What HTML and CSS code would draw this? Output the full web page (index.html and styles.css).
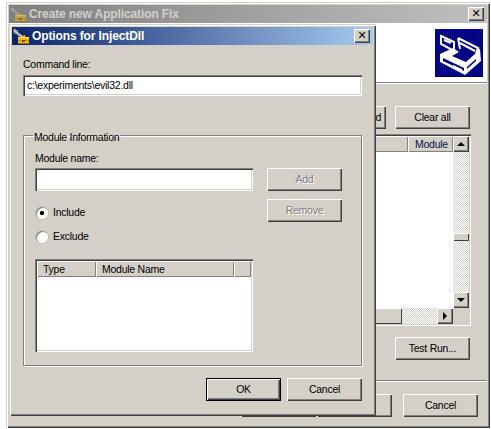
FILE: index.html
```html
<!DOCTYPE html>
<html lang="en">
<head>
<meta charset="utf-8">
<title>Options for InjectDll</title>
<link rel="stylesheet" href="styles.css">
</head>
<body>
<svg class="defs" width="0" height="0" aria-hidden="true">
  <defs>
    <symbol id="toolbox" viewBox="0 0 16 16">
      <path d="M0 2l2-2 1 2 2 0 0 2 5 4-2 2-5-4-2 0z" fill="#8f94a0"/>
      <path d="M1 2l2 2 5 4" stroke="#eceef2" fill="none"/>
      <path d="M5 9h3V7h4v2h4v7H5z" fill="#f0b818"/>
      <path d="M5 9h11v1H5z" fill="#fbe070"/>
      <path d="M5 15h11v1H5zM9 7h2v1H9z" fill="#a06c10"/>
      <path d="M5 12h11v1H5z" fill="#c48a12"/>
      <path d="M9 12h3v2H9z" fill="#7a5208"/>
    </symbol>
  </defs>
</svg>

<section class="win win-back">
  <header class="title title-off">
    <svg class="title-icon"><use href="#toolbox"/></svg>
    <span class="title-text">Create new Application Fix</span>
    <span class="close">✕</span>
  </header>
  <div class="banner">
    <svg class="logo" viewBox="0 0 48 48">
      <defs>
        <pattern id="dots" width="2" height="2" patternUnits="userSpaceOnUse">
          <rect width="2" height="2" fill="#000090"/>
          <rect width="1" height="1" fill="#0000ff"/>
          <rect x="1" y="1" width="1" height="1" fill="#000"/>
        </pattern>
      </defs>
      <rect width="48" height="48" fill="url(#dots)"/>
      <path d="M6 7l13 6v9l-13-7z" fill="none" stroke="#fff" stroke-width="2"/>
      <path d="M9 11l7 3" stroke="#fff" stroke-width="2"/>
      <path d="M23 9l20 10-2 5M23 9l2 11M25 14l15 8" fill="none" stroke="#fff" stroke-width="2"/>
      <path d="M5 25l13-6 6 4-7 4 14 6 10-9 1-5 3 1 1 12-16 14L5 33z" fill="#fff"/>
      <path d="M8 29l21 10v3L8 32z" fill="url(#dots)"/>
      <path d="M18 36l9 4v2l-9-4z" fill="#fff"/>
      <path d="M32 38l9-8v2l-9 8z" fill="url(#dots)"/>
    </svg>
  </div>
  <div class="rule"></div>
  <div class="back-body">
    <div class="tools">
      <button class="btn" type="button">Show selected</button>
      <button class="btn" type="button">Clear all</button>
    </div>
    <div class="fixlist">
      <div class="fixlist-main">
        <div class="head head-back">
          <span class="cell cell-grow"></span>
          <span class="cell cell-module">Module</span>
        </div>
        <div class="fixlist-rows"></div>
        <div class="hbar">
          <span class="hthumb"></span>
          <span class="track"></span>
          <span class="sbtn"><i class="tri tri-right"></i></span>
        </div>
      </div>
      <div class="vbar">
        <span class="sbtn sbtn-tall"><i class="tri tri-up"></i></span>
        <span class="track track-v"><span class="vthumb"></span></span>
        <span class="sbtn sbtn-tall"><i class="tri tri-down"></i></span>
        <span class="corner"></span>
      </div>
    </div>
    <div class="testrow"><button class="btn" type="button">Test Run...</button></div>
    <div class="sep"></div>
    <div class="nav">
      <button class="btn btn-back" type="button"></button>
      <button class="btn" type="button"></button>
      <button class="btn btn-cancel" type="button">Cancel</button>
    </div>
  </div>
</section>

<section class="win win-front">
  <header class="title title-on">
    <svg class="title-icon"><use href="#toolbox"/></svg>
    <span class="title-text">Options for InjectDll</span>
    <span class="close">✕</span>
  </header>
  <div class="front-body">
    <label class="cmd-label">Command line:</label>
    <div class="field field-cmd">c:\experiments\evil32.dll</div>
    <fieldset class="group">
      <legend>Module Information</legend>
      <div class="group-grid">
        <div class="group-left">
          <label class="mod-label">Module name:</label>
          <div class="field field-mod"></div>
          <div class="radio radio-first"><i class="dot dot-on"></i><span>Include</span></div>
          <div class="radio"><i class="dot"></i><span>Exclude</span></div>
          <div class="modlist">
            <div class="head head-front">
              <span class="cell cell-type">Type</span>
              <span class="cell cell-name">Module Name</span>
              <span class="cell cell-fill"></span>
            </div>
          </div>
        </div>
        <div class="group-right">
          <button class="btn btn-off" type="button">Add</button>
          <button class="btn btn-off" type="button">Remove</button>
        </div>
      </div>
    </fieldset>
    <div class="actions">
      <button class="btn btn-default" type="button">OK</button>
      <button class="btn" type="button">Cancel</button>
    </div>
  </div>
</section>
</body>
</html>
```
FILE: styles.css
```css
* { box-sizing: border-box; }
html, body { margin: 0; height: 429px; overflow: hidden; background: #fff; }
body { position: relative; font: 10.5px/13px "Liberation Sans", sans-serif; letter-spacing: -.25px; color: #000; }
.defs { position: absolute; }

.win {
  position: absolute;
  display: flex;
  flex-direction: column;
  padding: 3px;
  background: #d4d0c8;
  box-shadow: inset 1px 1px 0 #d4d0c8, inset 2px 2px 0 #fff, inset -1px -1px 0 #404040, inset -2px -2px 0 #808080;
}
.win-back { left: 6px; top: 2px; width: 484px; height: 426px; }
.win-front { left: 9px; top: 24px; width: 367px; height: 392px; }

.title {
  flex: none;
  display: flex;
  align-items: center;
  height: 18px;
  padding: 0 3px 0 0;
  color: #fff;
  font: bold 12px/18px "Liberation Sans", sans-serif;
  letter-spacing: -.12px;
}
.title-off { background: linear-gradient(90deg, #808080, #c0c0c0); color: #d4d0c8; }
.title-on { background: linear-gradient(90deg, #0a246a, #a6caf0); }
.title-icon { width: 16px; height: 16px; margin: 0 3px 0 1px; flex: none; }
.title-off .title-icon { opacity: .6; }
.title-text { flex: 1; }
.close {
  flex: none;
  width: 16px;
  height: 14px;
  background: #d4d0c8;
  color: #000;
  font: bold 11px/14px "DejaVu Sans", sans-serif;
  text-align: center;
  box-shadow: inset 1px 1px 0 #fff, inset -1px -1px 0 #404040, inset -2px -2px 0 #808080;
}

.banner { flex: none; height: 59px; background: #fff; display: flex; justify-content: flex-end; align-items: center; padding-right: 4px; }
.logo { width: 48px; height: 48px; display: block; }
.rule { flex: none; height: 2px; background: #808080; border-bottom: 1px solid #fff; }

.back-body { flex: 1; display: flex; flex-direction: column; padding: 22px 0 0 0; }
.tools { display: flex; justify-content: flex-end; gap: 9px; padding-right: 17px; }
.btn {
  width: 75px;
  height: 23px;
  padding: 0;
  border: 0;
  flex: none;
  background: #d4d0c8;
  color: #000;
  font: 10.5px/13px "Liberation Sans", sans-serif;
  letter-spacing: -.25px;
  box-shadow: inset 1px 1px 0 #fff, inset -1px -1px 0 #404040, inset -2px -2px 0 #808080;
}
.btn-off { color: #808080; text-shadow: 1px 1px 0 #fff; }
.btn-default { box-shadow: inset 0 0 0 1px #000, inset 2px 2px 0 #fff, inset -2px -2px 0 #404040, inset -3px -3px 0 #808080; }

.fixlist {
  flex: none;
  display: flex;
  height: 192px;
  margin: 5px 16px 0 20px;
  padding: 2px;
  background: #d4d0c8;
  box-shadow: inset 1px 1px 0 #808080, inset 2px 2px 0 #404040, inset -1px -1px 0 #fff;
}
.fixlist-main { flex: 1; display: flex; flex-direction: column; min-width: 0; }
.head { flex: none; display: flex; height: 16px; background: #d4d0c8; }
.cell {
  display: block;
  padding: 2px 0 0 6px;
  box-shadow: inset 1px 1px 0 #fff, inset -1px -1px 0 #808080;
  white-space: nowrap;
}
.cell-grow { flex: 1; }
.cell-module { width: 45px; color: #0a1450; padding-left: 7px; }
.fixlist-rows { flex: 1; background: #fff; }
.hbar { flex: none; display: flex; height: 16px; }
.hthumb { flex: none; width: 371px; background: #d4d0c8; box-shadow: inset 1px 1px 0 #fff, inset -1px -1px 0 #404040; }
.track {
  flex: 1;
  background-color: #fff;
  background-image: conic-gradient(#d4d0c8 25%, #fff 0 50%, #d4d0c8 0 75%, #fff 0);
  background-size: 2px 2px;
}
.track-v { display: block; padding-top: 81px; }
.vthumb { display: block; height: 8px; background: #d4d0c8; box-shadow: inset 1px 1px 0 #fff, inset -1px -1px 0 #404040; }
.sbtn {
  flex: none;
  display: flex;
  align-items: center;
  justify-content: center;
  width: 16px;
  height: 16px;
  background: #d4d0c8;
  box-shadow: inset 1px 1px 0 #fff, inset -1px -1px 0 #404040, inset -2px -2px 0 #808080;
}
.tri { display: block; width: 0; height: 0; border: 4px solid transparent; }
.tri-up { border-top: 0; border-bottom-color: #000; }
.tri-down { border-bottom: 0; border-top-color: #000; }
.tri-right { border-right: 0; border-left-color: #000; }
.vbar { flex: none; width: 16px; display: flex; flex-direction: column; }
.vbar .track-v { flex: 1; }
.corner { flex: none; height: 16px; background: #d4d0c8; }

.testrow { display: flex; justify-content: flex-end; padding: 11px 17px 0 0; }
.sep { flex: none; height: 2px; margin-top: 20px; background: #808080; border-bottom: 1px solid #fff; }
.nav { display: flex; justify-content: flex-end; padding: 12px 9px 0 0; gap: 11px; }
.btn-back { margin-right: -10px; }

.front-body { flex: 1; display: flex; flex-direction: column; padding: 13px 11px 0 11px; }
.cmd-label { display: block; height: 17px; }
.field {
  background: #fff;
  box-shadow: inset 1px 1px 0 #808080, inset 2px 2px 0 #404040, inset -1px -1px 0 #fff, inset -2px -2px 0 #d4d0c8;
  padding: 4px 0 0 4px;
}
.field-cmd { height: 21px; }
.group {
  flex: none;
  height: 239px;
  margin: 31px 0 0 0;
  padding: 6px 0 0 11px;
  min-width: 0;
  border: 1px solid #808080;
  box-shadow: 1px 1px 0 #fff, inset 1px 1px 0 #fff;
}
.group legend { padding: 4px 1px 0 1px; margin-left: -2px; font: inherit; line-height: 13px; }
.group-grid { display: grid; grid-template-columns: 218px 75px; column-gap: 14px; }
.mod-label { display: block; height: 18px; padding-top: 2px; }
.field-mod { height: 23px; }
.radio { display: flex; align-items: center; gap: 4px; height: 13px; margin-top: 11px; }
.radio-first { margin-top: 15px; }
.dot {
  display: block;
  flex: none;
  width: 12px;
  height: 12px;
  margin: 0 1px 0 1px;
  border-radius: 50%;
  background: #fff;
  box-shadow: inset 1px 1px 0 #808080, inset -1px -1px 0 #fff, 0 0 0 .5px #a8a49c;
}
.dot-on { background: radial-gradient(circle, #000 1.8px, #fff 2.4px); }
.modlist {
  height: 93px;
  margin-top: 16px;
  padding: 2px;
  background: #fff;
  box-shadow: inset 1px 1px 0 #808080, inset 2px 2px 0 #404040, inset -1px -1px 0 #fff, inset -2px -2px 0 #d4d0c8;
}
.cell-type { width: 59px; }
.cell-name { width: 138px; }
.cell-fill { flex: 1; }
.group-right { display: flex; flex-direction: column; gap: 8px; padding-top: 18px; }
.actions { display: flex; justify-content: flex-end; gap: 6px; padding-top: 12px; }
```
